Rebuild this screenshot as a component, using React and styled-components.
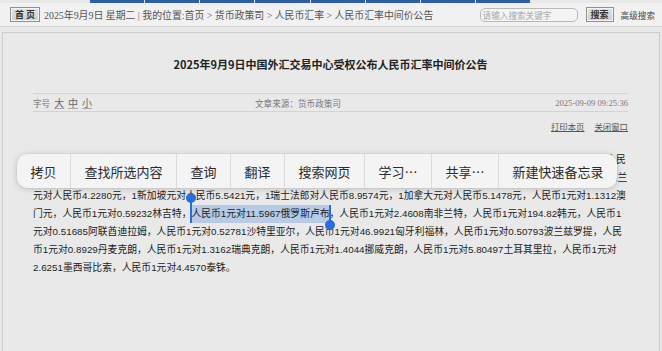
import React from 'react'
import styled, { createGlobalStyle } from 'styled-components'

const GlobalStyle = createGlobalStyle`
  html, body {
    margin: 0;
    padding: 0;
    background: #e8e8e8;
    overflow: hidden;
  }
`

const Page = styled.div`
  position: relative;
  height: 100vh;
  display: flex;
  flex-direction: column;
  font-family: 'Liberation Sans', 'Noto Sans CJK SC', sans-serif;
  color: #222;
`

const NavStrip = styled.div`
  display: flex;
  height: 3px;
  margin-left: 90px;
  width: 440px;
  background: #2d5ea6;
`

const NavTab = styled.div`
  flex: 1;
  border-left: 1px solid #dfe6f0;
  &:first-child {
    border-left: none;
  }
`

const TopBar = styled.div`
  display: flex;
  align-items: center;
  height: 23px;
  padding: 0 7px 0 10px;
  background: #f1f1f1;
  border-bottom: 1px solid #d6d6d6;
  color: #555;
`

const GrayButton = styled.span`
  display: inline-flex;
  align-items: center;
  justify-content: center;
  height: 13px;
  padding: 0 4px;
  background: linear-gradient(#e2e2e2, #cfcfcf);
  border: 1px solid #8f8f8f;
  box-shadow: inset 0 0 0 1px #f4f4f4;
  font-family: 'Noto Sans CJK SC', sans-serif;
  font-size: 9px;
  font-weight: 700;
  color: #333;
  white-space: pre;
`

const Crumbs = styled.span`
  margin-left: 4px;
  font-family: 'Liberation Serif', 'Noto Sans CJK SC', serif;
  font-size: 9.9px;
  white-space: nowrap;
`

const SearchBox = styled.div`
  margin-left: auto;
  width: 92px;
  height: 12px;
  padding: 0 2px;
  border: 1px solid #b8b8b8;
  border-radius: 5px;
  background: #f4f4f4;
  font-family: 'Noto Sans CJK SC', sans-serif;
  font-size: 8.6px;
  line-height: 12px;
  color: #a8a8a8;
`

const SearchGroup = styled.div`
  display: flex;
  align-items: center;
  margin-left: 8px;
  gap: 7px;
`

const PlainLink = styled.span`
  font-family: 'Noto Sans CJK SC', sans-serif;
  font-size: 8.6px;
  color: #444;
`

const Panel = styled.div`
  flex: 1;
  margin: 5px 2px 0;
  padding: 23px 31px 0 30px;
  border: 1px solid #cdcdcd;
  border-bottom: none;
  background: #e9e9e9;
`

const Title = styled.h1`
  margin: 0;
  text-align: center;
  font-family: 'Noto Sans CJK SC', sans-serif;
  font-size: 11px;
  line-height: 16px;
  font-weight: 700;
  color: #222;
`

const MetaRow = styled.div`
  display: grid;
  grid-template-columns: 222px 1fr auto;
  align-items: center;
  height: 17px;
  margin-top: 21px;
  border-top: 1px solid #d3d3d3;
  border-bottom: 1px solid #d3d3d3;
  font-family: 'Noto Sans CJK SC', sans-serif;
  font-size: 8.6px;
  color: #777;
`

const SizeLink = styled.span`
  margin-left: 2px;
  font-size: 10px;
  color: #666;
  text-decoration: underline;
  text-decoration-color: #aaa;
`

const Stamp = styled.span`
  font-family: 'Liberation Serif', serif;
  font-size: 8.6px;
  color: #777;
`

const LinkRow = styled.div`
  display: flex;
  justify-content: flex-end;
  gap: 10px;
  margin-top: 7px;
  font-family: 'Noto Sans CJK SC', sans-serif;
  font-size: 8.4px;
  line-height: 14px;
  color: #555;
`

const Underlined = styled.span`
  text-decoration: underline;
`

const Body = styled.div`
  margin-top: 18px;
  font-size: 9.8px;
  line-height: 18px;
  color: #1c1c1c;
`

const Line = styled.div`
  white-space: nowrap;
  height: 18px;
`

const Selected = styled.span`
  position: relative;
  display: inline-block;
  height: 18px;
  vertical-align: top;
  background: #b7cbe7;
`

const Handle = styled.span`
  position: absolute;
  width: 2px;
  background: #2a6ddd;
  left: ${({ end }) => (end ? 'auto' : '-1px')};
  right: ${({ end }) => (end ? '-1px' : 'auto')};
  top: ${({ end }) => (end ? '0' : '-8px')};
  bottom: ${({ end }) => (end ? '-3px' : '0')};

  &::after {
    content: '';
    position: absolute;
    left: -4px;
    width: 10px;
    height: 10px;
    border-radius: 50%;
    background: #2a6ddd;
    top: ${({ end }) => (end ? 'auto' : '-4px')};
    bottom: ${({ end }) => (end ? '-4px' : 'auto')};
  }
`

const Menu = styled.div`
  position: absolute;
  left: 17px;
  top: 154px;
  display: flex;
  height: 34px;
  background: #f4f4f4;
  border-radius: 10px;
  box-shadow: 0 1px 6px rgba(0, 0, 0, 0.18), 0 0 0 0.5px rgba(0, 0, 0, 0.06);
  overflow: hidden;
`

const MenuItem = styled.div`
  display: flex;
  align-items: center;
  padding: 0 13.5px;
  border-left: 1px solid #dadada;
  font-family: 'Noto Sans CJK SC', sans-serif;
  font-size: 13px;
  color: #2b2b2b;
  white-space: nowrap;
  &:first-child {
    border-left: none;
  }
`

const menuItems = ['拷贝', '查找所选内容', '查询', '翻译', '搜索网页', '学习…', '共享…', '新建快速备忘录']

const lines = [
  '　　中国人民银行授权中国外汇交易中心公布，2025年9月9日银行间外汇市场人民币汇率中间价为1美元对人民币7.1029元，1欧元对人民',
  '币8.3324元，100日元对人民币4.8301元，1港元对人民币0.91109元，1英镑对人民币9.6345元，1澳大利亚元对人民币4.6536元，1新西兰',
  '元对人民币4.2280元，1新加坡元对人民币5.5421元，1瑞士法郎对人民币8.9574元，1加拿大元对人民币5.1478元，人民币1元对1.1312澳',
  null,
  '元对0.51685阿联酋迪拉姆，人民币1元对0.52781沙特里亚尔，人民币1元对46.9921匈牙利福林，人民币1元对0.50793波兰兹罗提，人民',
  '币1元对0.8929丹麦克朗，人民币1元对1.3162瑞典克朗，人民币1元对1.4044挪威克朗，人民币1元对5.80497土耳其里拉，人民币1元对',
  '2.6251墨西哥比索，人民币1元对4.4570泰铢。',
]

export default function App() {
  return (
    <Page>
      <GlobalStyle />
      <NavStrip>
        {Array.from({ length: 8 }).map((_, i) => (
          <NavTab key={i} />
        ))}
      </NavStrip>
      <TopBar>
        <GrayButton>{'首 页'}</GrayButton>
        <Crumbs>2025年9月9日 星期二 | 我的位置:首页 &gt; 货币政策司 &gt; 人民币汇率 &gt; 人民币汇率中间价公告</Crumbs>
        <SearchBox>请输入搜索关键字</SearchBox>
        <SearchGroup>
          <GrayButton>搜索</GrayButton>
          <PlainLink>高级搜索</PlainLink>
        </SearchGroup>
      </TopBar>
      <Panel>
        <Title>2025年9月9日中国外汇交易中心受权公布人民币汇率中间价公告</Title>
        <MetaRow>
          <span>
            字号 <SizeLink>大</SizeLink> <SizeLink>中</SizeLink> <SizeLink>小</SizeLink>
          </span>
          <span>文章来源：货币政策司</span>
          <Stamp>2025-09-09 09:25:36</Stamp>
        </MetaRow>
        <LinkRow>
          <Underlined>打印本页</Underlined>
          <Underlined>关闭窗口</Underlined>
        </LinkRow>
        <Body>
          {lines.map((text, i) =>
            text === null ? (
              <Line key={i}>
                门元，人民币1元对0.59232林吉特，
                <Selected>
                  <Handle />
                  人民币1元对11.5967俄罗斯卢布
                  <Handle end />
                </Selected>
                ，人民币1元对2.4608南非兰特，人民币1元对194.82韩元，人民币1
              </Line>
            ) : (
              <Line key={i}>{text}</Line>
            )
          )}
        </Body>
      </Panel>
      <Menu>
        {menuItems.map((item) => (
          <MenuItem key={item}>{item}</MenuItem>
        ))}
      </Menu>
    </Page>
  )
}
